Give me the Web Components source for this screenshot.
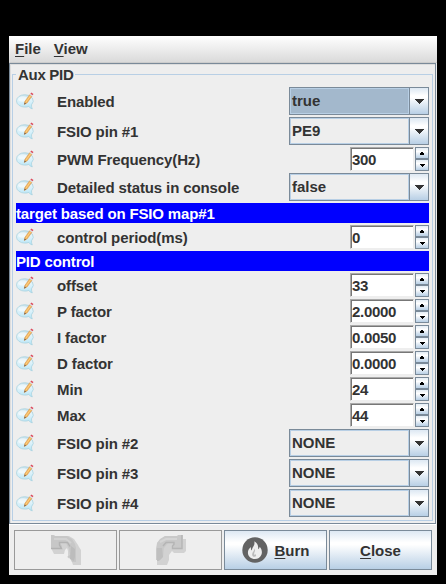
<!DOCTYPE html>
<html lang="en">
<head>
<meta charset="utf-8">
<title>Aux PID</title>
<style>
html,body{margin:0;height:100%;background:#000}
body{font:bold 15px/18px "Liberation Sans",Arial,sans-serif;color:#333;overflow:hidden}
</style>
</head>
<body>
<aux-window></aux-window>
<script>
const define=(name,html,setup)=>customElements.define(name,class extends HTMLElement{
  connectedCallback(){
    if(this.shadowRoot)return;
    const t=document.createElement('template');
    t.innerHTML=html;
    this.attachShadow({mode:'open'}).append(t.content.cloneNode(true));
    if(setup)setup(this,this.shadowRoot);
  }
});

define('note-icon',`<style>:host{display:block;width:18px;height:18px}svg{display:block}</style>
<svg width="18" height="18" viewBox="0 0 18 18">
<defs><linearGradient id="g" x1="0" y1="0" x2="0" y2="1"><stop offset="0" stop-color="#c3e0ea"/><stop offset=".35" stop-color="#e2f3fa"/><stop offset=".6" stop-color="#d3effa"/><stop offset="1" stop-color="#b0e2f5"/></linearGradient></defs>
<path d="M8.700 2.700A8.200 6.200 0 0 0 8.700 15.100Q11 15.200 12.800 14.400Q14.200 16.600 16.300 16.900Q15.300 15 15.500 12.700A8.200 6.200 0 0 0 8.700 2.700z" fill="url(#g)" stroke="#abd3e0" stroke-width=".8"/>
<ellipse cx="6.800" cy="7" rx="4.600" ry="2.800" fill="#fff" opacity=".5"/>
<path d="M8.300 12.500l.7-3.300 4.700-6.500 2.200 1.600-4.700 6.500z" fill="#f3b45b" stroke="#d9994f" stroke-width=".6"/>
<path d="M9.900 10.200l4.700-6.500" stroke="#ffd991" stroke-width=".8"/>
<path d="M8.200 12.500l.4-2 1.500 1z" fill="#665b55"/>
<path d="M13.600 2.700l.8-1 2.200 1.600-.8 1z" fill="#d8dfe6"/>
<path d="M14.400 1.700l.9-1.300 2.200 1.600-.9 1.300z" fill="#dc4a5c"/>
</svg>`);

define('menu-item',`<style>:host{display:block}u{text-underline-offset:2px;text-decoration-thickness:1px}</style><u></u><slot></slot>`,
(h,r)=>r.querySelector('u').textContent=h.getAttribute('key'));

define('menu-bar',`<style>:host{display:flex;gap:13px;height:27px;box-sizing:border-box;padding:4px 6px 0;background:linear-gradient(#fff,#dadada);border-bottom:1px solid #ccc}</style><slot></slot>`);

define('combo-box',`<style>
:host{display:flex;box-sizing:border-box;width:140px;height:28px;border:1px solid #7a8a99;background:#eee}
.v{flex:1;box-sizing:border-box;border:1px solid #b8cfe5;padding:3px 1px 0;line-height:18px}
:host([active]) .v{background:#a3b8cc}
.b{width:18px;border-left:1px solid #7a8a99;background:linear-gradient(#dde8f3,#fff 30%,#fff 36%,#b8cfe5);display:flex;align-items:center;justify-content:center}
svg{display:block}
</style><div class="v"><slot></slot></div><div class="b"><svg width="10" height="5" shape-rendering="crispEdges"><path d="M0 0h10L5 5z" fill="#333"/></svg></div>`);

define('spin-box',`<style>
:host{display:flex;gap:1px;width:79px;height:24px}
.v{box-sizing:border-box;width:64px;background:#fff;border:1px solid;border-color:#aaa #eee #eee #aaa;box-shadow:inset 1px 1px #777;padding:3px 1px 0;letter-spacing:-.3px}
.b{width:14px;display:grid;grid-template-rows:12px 12px}
.b div{box-sizing:border-box;border:1px solid #7a8a99;background:linear-gradient(#e4edf5,#fff 35%,#b8cfe5);display:flex;align-items:center;justify-content:center}
svg{display:block}
</style><div class="v"><slot></slot></div><div class="b">
<div><svg width="4" height="3" shape-rendering="crispEdges"><path d="M1 0h2v1h1v2H0V1h1z"/></svg></div>
<div><svg width="5" height="3" shape-rendering="crispEdges"><path d="M0 0h5v1H4v1H3v1H2V2H1V1H0z"/></svg></div></div>`);

define('field-row',`<style>
:host{display:flex;align-items:center;height:26px;padding-right:3px}
:host([tall]){height:30px}
note-icon{margin:0 23px 0 3px}
.l{flex:1;white-space:nowrap;padding-top:1px;letter-spacing:-.11px}
</style><note-icon></note-icon><div class="l"></div><slot></slot>`,
(h,r)=>r.querySelector('.l').textContent=h.getAttribute('label'));

define('section-bar',`<style>:host{display:block;height:20px;margin:1px 3px;background:#00f;color:#fff;line-height:21px;white-space:nowrap;letter-spacing:-.15px}</style><slot></slot>`);

define('group-box',`<style>
:host{display:block;box-sizing:border-box;margin:10px 0 0 2px;width:421px;height:447px;border:1px solid #b8cfe5}
.t{width:max-content;height:18px;margin-top:-9px;margin-left:3px;padding:0 2px;background:#eee;letter-spacing:-.3px}
.c{padding-top:2px}
</style><div class="t"></div><div class="c"><slot></slot></div>`,
(h,r)=>r.querySelector('.t').textContent=h.getAttribute('title-text'));

define('push-button',`<style>
:host{display:flex;box-sizing:border-box;width:103px;height:40px;border:1px solid #7a8a99;background:linear-gradient(#dde8f3,#fff 30%,#fff 36%,#b8cfe5);align-items:center;justify-content:center;gap:6px}
:host([disabled]){background:#eee;border-color:#999}
u{text-underline-offset:2px;text-decoration-thickness:1px}
.l{padding-top:2px}
.l:empty{display:none}
</style><slot name="icon"></slot><span class="l"></span>`,(h,r)=>{
  const s=h.getAttribute('label');
  if(s){const u=document.createElement('u');u.textContent=s[0];r.querySelector('.l').append(u,s.slice(1));}
});

define('curve-arrow',`<style>:host{display:block;margin-bottom:0}svg{display:block}:host([flip]) .a,:host(:not([flip])) .b{display:none}</style>
<svg class="a" width="30" height="30" viewBox="0 0 30 30">
<path d="M0 0h3l1 1h14l5 3 4 6 1 2 2 3v15h-8l-2-6-3-1v-7l-1-3-2 2-1 4H3l-2-4z" fill="#d2d2d2"/>
<path d="M0 0h2l2 1h12l5 3 3 5 1 4v14h-4l-2-4-3-1 3-2-1-6-3-6H9l2 3v3H0z" fill="#c7c7c7"/>
<path d="M3 4h12l5 4" fill="none" stroke="#d2d2d2" stroke-width="2"/>
<path d="M0 13.500h10.500L8.500 10V7.500h8l2.500 4" fill="none" stroke="#b2b2b2" stroke-width="1.400"/>
<path d="M20 11l4 3v8l-1 4-4-2z" fill="#bcbcbc"/>
</svg>
<svg class="b" width="30" height="30" viewBox="0 0 30 30">
<path d="M9 1h13l1-1h4v4h3v12l-2 2H18l-2-2-3 4v5l-2 5H1V8z" fill="#d2d2d2"/>
<path d="M9 1h12l1-1h4v14h-8l-2-2 1-4h-5l-4 5-1 9-3 3H0V14l1-6 3-4z" fill="#c9c9c9"/>
<path d="M4 7l6-3h11" fill="none" stroke="#d5d5d5" stroke-width="2"/>
<path d="M26 0v13.500h-9.500V11l1.500-1.500V7.500h-8L7 11" fill="none" stroke="#b5b5b5" stroke-width="1.400"/>
<path d="M1 13h5l1 9-4 4H1z" fill="#bfbfbf"/>
</svg>`);

define('flame-icon',`<style>:host{display:block;margin:0 0 1px 1px}svg{display:block}</style>
<svg width="26" height="26" viewBox="0 0 26 26"><circle cx="13" cy="13" r="12.700" fill="#636363"/>
<path d="M12.200 4.300c3.400 2 4.500 4.800 3.800 8 1-.4 1.600-1.300 1.700-2.500 2 2.400 2.800 5.200 1.700 7.900-1.100 2.700-3.500 4.300-6.500 4.300-3.900 0-7-2.700-7-6.300 0-2.400 1.100-4.200 3-5.600-.2 1.700.1 2.800 1 3.500.1-2 .7-3.100 1.600-4.400.9-1.500 1.300-3.100.7-4.900z" fill="#eee"/>
<path d="M12.500 11.600c1.600 2.100-.8 3.700-.3 5.600.3 1 1.400.9 1.500-.1.900 1.300.2 2.600-1.200 2.700-1.800 0-2.700-1.500-2.200-3.300.4-1.700 2.200-2.700 2.200-4.900z" fill="#bbb"/></svg>`);

define('aux-window',`<style>
:host{display:block;box-sizing:border-box;width:428px;height:539px;margin:36px 0 0 9px;background:#eee}
main{box-sizing:border-box;width:427px;height:461px;border:1px solid #7a8a99;box-shadow:inset 1px 1px #ddd,0 1px #fff}
footer{display:flex;gap:2px;padding:6px 5px 0}
</style>
<menu-bar><menu-item key="F">ile</menu-item><menu-item key="V">iew</menu-item></menu-bar>
<main><group-box title-text="Aux PID">
<field-row tall label="Enabled"><combo-box active>true</combo-box></field-row>
<field-row tall label="FSIO pin #1"><combo-box>PE9</combo-box></field-row>
<field-row label="PWM Frequency(Hz)"><spin-box>300</spin-box></field-row>
<field-row tall label="Detailed status in console"><combo-box>false</combo-box></field-row>
<section-bar>target based on FSIO map#1</section-bar>
<field-row label="control period(ms)"><spin-box>0</spin-box></field-row>
<section-bar>PID control</section-bar>
<field-row label="offset"><spin-box>33</spin-box></field-row>
<field-row label="P factor"><spin-box>2.0000</spin-box></field-row>
<field-row label="I factor"><spin-box>0.0050</spin-box></field-row>
<field-row label="D factor"><spin-box>0.0000</spin-box></field-row>
<field-row label="Min"><spin-box>24</spin-box></field-row>
<field-row label="Max"><spin-box>44</spin-box></field-row>
<field-row tall label="FSIO pin #2"><combo-box>NONE</combo-box></field-row>
<field-row tall label="FSIO pin #3"><combo-box>NONE</combo-box></field-row>
<field-row tall label="FSIO pin #4"><combo-box>NONE</combo-box></field-row>
</group-box></main>
<footer>
<push-button disabled><curve-arrow slot="icon"></curve-arrow></push-button>
<push-button disabled><curve-arrow slot="icon" flip></curve-arrow></push-button>
<push-button label="Burn"><flame-icon slot="icon"></flame-icon></push-button>
<push-button label="Close"></push-button>
</footer>`);
</script>
</body>
</html>
